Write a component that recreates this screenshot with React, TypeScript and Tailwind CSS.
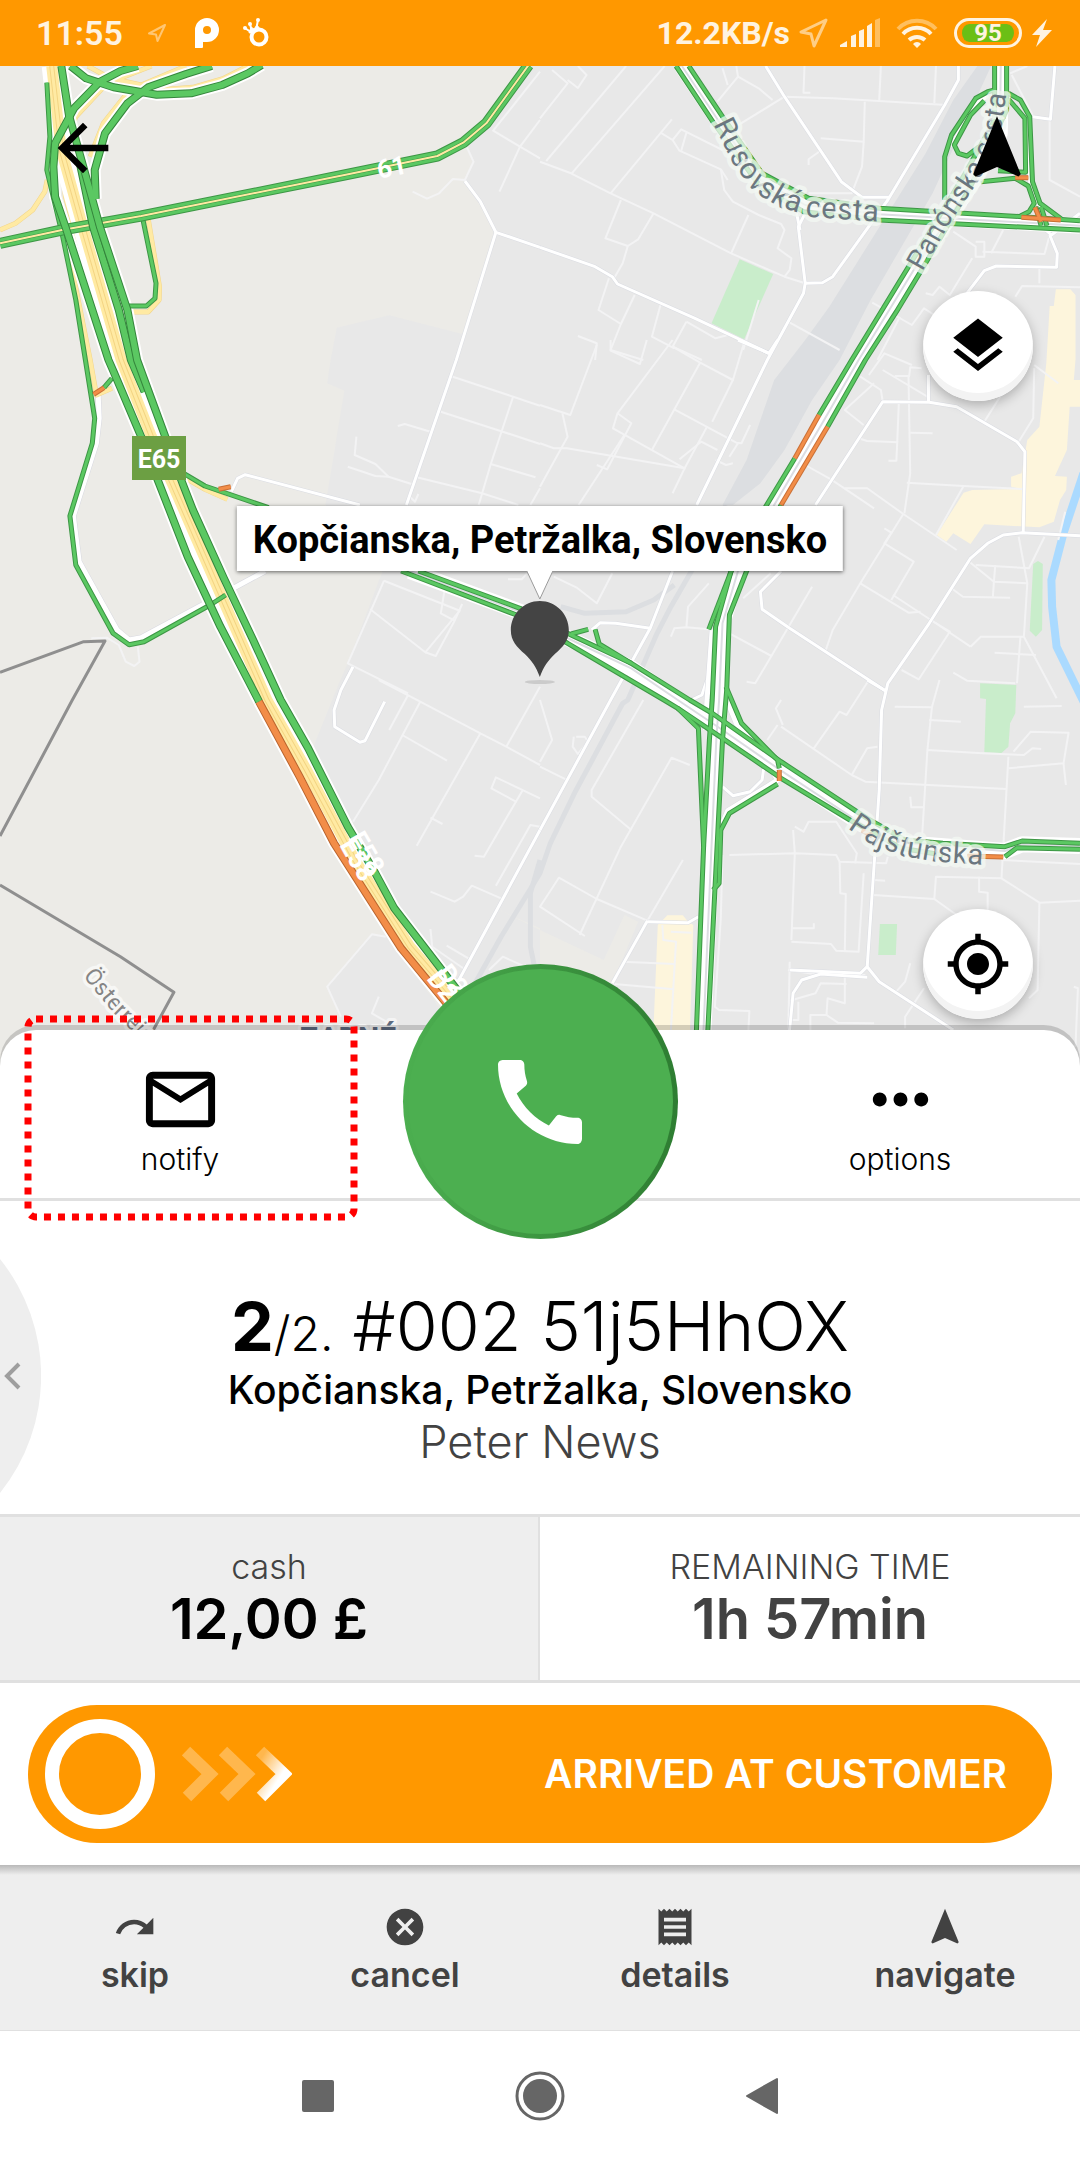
import type { ReactNode } from "react";
import {
  MdArrowBack,
  MdCall,
  MdCancel,
  MdLayers,
  MdMailOutline,
  MdMoreHoriz,
  MdMyLocation,
  MdNavigation,
  MdReceipt,
  MdRedo,
} from "react-icons/md";

/* The map is drawn from six sheets, each with its own 1568 x 1080 grid. */
const sheet =
  (left: number, top: number) =>
  (...n: number[]) => {
    const out: string[] = [];
    for (let i = 0; i < n.length; i += 2) {
      out.push(`${(left + (n[i] * 540) / 1568).toFixed(1)},${(top + n[i + 1] / 3).toFixed(1)}`);
    }
    return out.join(" ") + " ";
  };
const a = sheet(0, 0);
const b = sheet(540, 0);
const c = sheet(0, 340);
const d = sheet(540, 340);
const e = sheet(0, 680);
const f = sheet(540, 680);

const urban = [
  a(1540, 190, 1360, 440, 1375, 485, 1350, 540, 1400, 610, 1440, 697, 1345, 1003, 1130, 946, 978, 983, 960, 1080) +
    c(950, 130, 1000, 152, 945, 495, 1110, 695, 1010, 970) +
    e(980, 20, 910, 200, 1025, 430, 1100, 580, 1150, 680, 1350, 930, 1500, 1200) +
    f(1568, 1200, 1568, 0) +
    b(1568, 190),
  e(1080, 763, 950, 920, 990, 1010, 990, 1200, 1400, 1200, 1260, 960, 1120, 770),
];
const rural = [e(1450, 690, 1568, 745, 1568, 1000, 1330, 1000) + f(210, 910, 285, 725, 245, 705, 185, 840, 0, 750)];

const parks = [
  b(580, 778, 677, 822, 593, 1018, 498, 970),
  d(1432, 672, 1446, 663, 1460, 672, 1458, 870, 1440, 890, 1422, 872),
  f(1278, 10, 1383, 15, 1380, 100, 1365, 130, 1360, 200, 1340, 219, 1290, 217, 1295, 57, 1278, 55),
  f(987, 732, 1037, 732, 1033, 825, 982, 825),
];
const shops = [
  b(1498, 868, 1540, 868, 1555, 885, 1555, 1080) +
    d(1550, 120, 1568, 120, 1568, 200, 1538, 200, 1530, 330, 1495, 408, 1530, 410, 1528, 450, 1510, 480) +
    d(1492, 545, 1450, 562, 1290, 553, 1250, 612, 1200, 580, 1180, 605, 1152, 585, 1230, 458, 1255, 450) +
    d(1400, 447, 1368, 440, 1368, 410, 1398, 400, 1415, 300, 1450, 260, 1470, 70) +
    b(1480, 918, 1492, 918),
  f(370, 706, 415, 706, 430, 725, 445, 735, 432, 1160, 325, 1160, 342, 735),
];
const railYards = [
  b(1270, 198, 1310, 198, 1140, 580, 960, 900, 870, 1080) +
    d(790, 180, 710, 330, 640, 430, 560, 495, 530, 495, 600, 360, 680, 120, 770, 0) +
    b(840, 920, 1120, 460, 1200, 300),
];
const railTracks = [
  d(540, 495, 440, 693, 380, 800, 340, 880, 255, 1080) + f(240, 70, 100, 340, 30, 490, 0, 580) + e(1455, 770, 1390, 890, 1330, 1000),
  e(1568, 540, 1540, 640, 1540, 800, 1560, 900),
  d(60, 800, 130, 820, 250, 815, 330, 780, 390, 735),
];

const lanes = [
  a(1568, 215, 1432, 392, 1510, 440, 1568, 475),
  a(1568, 360, 1510, 440, 1450, 575),
  a(1355, 440, 1375, 485, 1350, 540, 1315, 537, 1275, 580, 1240, 596, 1198, 575),
  b(0, 485, 90, 520, 205, 580, 330, 640, 555, 760, 710, 830, 770, 850),
  b(18, 483, 250, 198),
  b(92, 520, 362, 198),
  b(205, 580, 383, 358),
  b(0, 355, 80, 250, 35, 210),
  b(80, 240, 110, 264, 135, 225, 110, 198),
  b(350, 398, 385, 420, 410, 388, 530, 450),
  b(385, 420, 405, 452, 525, 508, 545, 540),
  b(410, 452, 425, 398),
  b(525, 508, 535, 570, 560, 605, 635, 645, 700, 672, 710, 690, 690, 745, 730, 775, 725, 810, 710, 830),
  b(555, 760, 605, 645),
  b(235, 600, 190, 715, 255, 738, 285, 718, 330, 640),
  b(255, 738, 240, 790, 215, 835),
  b(515, 305, 575, 230, 570, 198),
  b(575, 230, 635, 265, 675, 300),
  b(545, 255, 530, 205),
  b(560, 385, 710, 290, 850, 295, 1180, 315),
  b(768, 198, 765, 278, 785, 278),
  b(990, 198, 985, 300),
  b(1150, 198, 1145, 310),
  b(943, 305, 940, 425, 815, 415),
  b(940, 425, 935, 500, 905, 580, 780, 580),
  b(810, 455, 780, 478, 780, 495),
  b(200, 835, 170, 930, 235, 972, 205, 1050, 300, 1080),
  b(275, 885, 235, 972),
  b(350, 915, 325, 1010, 390, 1045),
  b(425, 965, 385, 1040, 470, 1080),
  b(425, 965, 510, 1015, 545, 1005),
  b(110, 1008, 165, 1030, 160, 1080),
  b(635, 900, 590, 1050),
  b(720, 965, 870, 1050),
  b(965, 908, 1080, 975, 1115, 925, 1145, 945),
  b(1045, 950, 980, 1080),
  b(1200, 695, 1265, 740, 1265, 770, 1290, 770, 1290, 725, 1265, 725),
  b(1285, 755, 1465, 762, 1480, 705),
  b(1120, 880, 1140, 885, 1160, 860, 1190, 885, 1255, 775),
  b(1310, 760, 1345, 690),
  b(1380, 890, 1400, 858, 1568, 862),
  b(1450, 800, 1450, 850),
  b(1480, 360, 1480, 540, 1568, 590),
  b(1370, 225, 1435, 355),
  b(1365, 220, 1415, 198),
  c(1308, 108, 1490, 170, 1568, 197),
  c(1280, 215, 1460, 275, 1568, 312),
  c(1490, 170, 1425, 372, 1390, 495),
  c(1425, 372, 1555, 412),
  c(1210, 412, 1400, 460, 1505, 495),
  c(1155, 258, 1175, 252, 1250, 275),
  c(1035, 290, 1030, 345, 1090, 372, 1128, 410, 1195, 432),
  c(1010, 380, 1090, 408, 1128, 410),
  c(1568, 445, 1540, 495),
  c(1115, 722, 1335, 812, 1235, 937, 1075, 808),
  c(1115, 722, 1010, 970, 1185, 1060),
  c(1290, 755, 1280, 820, 1320, 842, 1265, 948, 1235, 937),
  c(1342, 792, 1320, 842),
  c(1475, 718, 1515, 718, 1530, 700),
  c(265, 895, 310, 893, 345, 915, 365, 965, 390, 978, 405, 965, 400, 920),
  c(1185, 465, 1205, 485, 1215, 462),
  d(0, 195, 88, 225, 165, 15),
  d(205, 0, 205, 32, 290, 72, 310, 0),
  d(0, 440, 80, 290, 65, 220),
  d(385, 0, 225, 220, 212, 265, 420, 385, 485, 260),
  d(225, 220, 265, 250, 195, 388, 165, 375),
  d(112, 495, 245, 285),
  d(385, 20, 465, 68, 560, 120, 595, 0),
  d(465, 68, 325, 330),
  d(560, 120, 500, 245),
  d(390, 208, 570, 308, 585, 310, 610, 255),
  d(0, 310, 40, 325, 78, 325, 420, 385, 385, 460),
  d(405, 358, 468, 305, 515, 330),
  d(510, 360, 540, 375, 560, 370),
  d(575, 310, 550, 350),
  d(930, 110, 990, 150, 995, 185),
  d(995, 90, 1125, 170),
  d(955, 105, 1000, 40, 1080, 75),
  d(1030, 108, 1072, 108, 1075, 82, 1108, 85),
  d(1070, 108, 1075, 400, 1058, 520),
  d(1042, 185, 1035, 362, 1012, 362),
  d(970, 130, 885, 210, 940, 255),
  d(925, 295, 950, 303, 1040, 307),
  d(1075, 278, 1140, 280),
  d(1065, 428, 1230, 438, 1400, 447),
  d(770, 375, 845, 418, 970, 505),
  d(885, 445, 950, 445, 1055, 522, 1210, 630),
  d(1230, 438, 1150, 585),
  d(1055, 522, 930, 730, 850, 870, 830, 930),
  d(1000, 565, 1020, 578, 1000, 610, 1085, 665, 1020, 780),
  d(930, 730, 1070, 818, 1105, 815),
  d(1025, 765, 1135, 840, 1250, 920),
  d(1135, 840, 1190, 875, 1100, 1018, 1050, 990),
  d(1250, 920, 1280, 890, 1405, 890),
  d(1320, 938, 1440, 945),
  d(1200, 998, 1240, 1022, 1380, 1030),
  d(1395, 890, 1385, 1030),
  d(1405, 890, 1500, 1075),
  d(1390, 590, 1415, 730, 1405, 890),
  d(1465, 590, 1420, 685, 1265, 675),
  d(1250, 668, 1318, 725, 1415, 730),
  d(1318, 725, 1322, 675),
  d(1195, 745, 1228, 770, 1365, 773),
  d(1318, 725, 1315, 770),
  d(1525, 515, 1505, 600),
  d(1290, 245, 1345, 155),
  d(1435, 85, 1432, 235, 1390, 305),
  d(1435, 75, 1505, 130),
  d(380, 890, 390, 865, 425, 862, 490, 868),
  d(425, 862, 430, 800, 490, 730),
  d(40, 710, 105, 742, 165, 790, 210, 700),
  d(590, 775, 670, 700),
  d(550, 880, 672, 948, 790, 740),
  d(600, 1025, 625, 1030, 672, 948),
  e(1100, 0, 1220, 65, 1395, 160, 1470, 200, 1568, 255),
  e(1220, 65, 1100, 300, 1025, 425),
  e(1185, 45, 1130, 150),
  e(1168, 165, 1298, 242),
  e(1395, 160, 1210, 497),
  e(1250, 413, 1285, 432),
  e(1470, 200, 1568, 20),
  e(1568, 355, 1440, 292, 1427, 325, 1498, 365, 1518, 330),
  e(1498, 365, 1405, 530, 1378, 527),
  e(1568, 440, 1540, 435, 1440, 617),
  e(1250, 635, 1320, 665, 1345, 650, 1370, 617, 1455, 655),
  e(1250, 747, 1255, 800, 1345, 865),
  e(1297, 797, 1360, 835),
  e(1120, 770, 1080, 763, 950, 920, 990, 1010),
  e(1100, 950, 1080, 1000, 1130, 1030),
  e(1420, 870, 1460, 830, 1568, 880),
  f(0, 60, 35, 180, 0, 245),
  f(0, 260, 75, 298),
  f(300, 60, 150, 330, 150, 350, 265, 450),
  f(435, 255, 382, 233, 235, 500, 115, 765),
  f(415, 540, 312, 722, 165, 657, 55, 593, 0, 680, 130, 768),
  f(105, 170, 130, 170, 140, 185, 110, 222, 95, 200, 98, 170),
  f(740, 440, 765, 455, 780, 425, 860, 425, 920, 520, 915, 550),
  f(735, 450, 740, 520, 730, 780),
  f(550, 525, 740, 520, 860, 525, 870, 545, 1005, 550, 1010, 530),
  f(870, 545, 872, 640, 888, 642, 885, 815),
  f(730, 785, 845, 792, 860, 812, 925, 815, 940, 580),
  f(730, 745, 795, 745, 795, 730),
  f(705, 135, 685, 85, 700, 60),
  f(690, 135, 660, 180),
  f(700, 140, 905, 285, 945, 305, 1355, 327),
  f(905, 285, 950, 205, 980, 200),
  f(795, 205, 870, 95, 890, 105, 955, 0),
  f(1030, 80, 1138, 82, 1160, 0),
  f(1138, 82, 1125, 210, 1110, 460),
  f(1130, 120, 1222, 125),
  f(1125, 210, 1285, 220, 1405, 225, 1430, 205, 1455, 207),
  f(1375, 215, 1425, 155, 1535, 158, 1520, 250, 1360, 265),
  f(1520, 250, 1527, 315),
  f(1405, 80, 1515, 78),
  f(1360, 230, 1340, 595),
  f(1075, 350, 1078, 382, 1115, 382),
  f(968, 645, 1145, 657, 1150, 590, 1340, 595, 1450, 668, 1445, 930, 1420, 955),
  f(1145, 657, 1230, 720),
  f(1275, 590, 1275, 635, 1300, 638, 1300, 700),
  f(1450, 668, 1568, 662),
  f(1340, 540, 1568, 552),
  f(970, 600, 1002, 602),
  f(530, 525, 525, 715, 508, 980, 520, 990, 608, 993, 605, 1050),
  f(725, 845, 720, 1100),
  f(720, 870, 815, 885, 945, 885),
  f(885, 890, 885, 970, 835, 955, 832, 1005, 785, 1005, 785, 1060),
  f(890, 912, 815, 910, 800, 940, 725, 962),
  f(832, 1005, 865, 1028, 970, 1030),
  f(750, 965, 750, 1020, 730, 1020),
  f(1075, 850, 1060, 905, 1030, 940),
  f(1115, 925, 1060, 1010, 1060, 1045),
  f(1550, 920, 1562, 925, 1555, 1100),
  f(355, 735, 358, 780, 395, 785, 380, 1050),
  f(380, 755, 440, 758),
  f(240, 845, 390, 852),
  f(215, 912, 390, 928),
];

const streets = [
  a(1350, 543, 1395, 605, 1440, 697, 1568, 742),
  a(1440, 697, 1325, 1080) + c(1180, 495),
  c(672, 455, 690, 415, 712, 404, 1045, 495),
  b(0, 742, 160, 800, 210, 830, 225, 852, 450, 955, 665, 1060),
  b(655, 198, 710, 290, 875, 545, 935, 592, 1015, 592),
  b(1215, 198, 1215, 240, 1175, 315, 1010, 600, 850, 830, 820, 848, 770, 850),
  b(770, 640, 750, 680, 770, 850, 765, 880, 660, 1080) + d(455, 495),
  b(745, 640, 755, 690),
  b(1495, 198, 1482, 358, 1430, 350),
  b(1480, 705, 1502, 760, 1500, 802, 1325, 798, 1290, 812, 1210, 920),
  b(1430, 655, 1485, 705, 1568, 640),
  d(575, 0, 665, 40, 690, 0),
  d(800, 495, 995, 185, 1130, 187, 1210, 200, 1385, 305, 1408, 335, 1403, 578),
  d(1128, 105, 1128, 185),
  d(1568, 587, 1400, 578, 1345, 585, 1300, 610, 1250, 655, 1130, 850, 1010, 1030) + f(992, 90, 985, 330, 950, 860),
  d(700, 693, 640, 755, 645, 808, 725, 865, 1003, 1052),
  f(950, 0, 1003, 32),
  d(385, 693, 320, 865, 205, 1080) + f(0, 450),
  d(150, 870, 175, 848, 220, 850, 320, 865),
  e(1568, 450, 1330, 905),
  c(1025, 980, 990, 1050) + e(970, 90, 972, 140, 1045, 187, 1060, 182, 1117, 65),
  f(312, 722, 210, 910),
  f(312, 725, 430, 728, 460, 710),
  f(725, 870, 930, 880, 950, 860, 985, 905, 1200, 1050),
  f(720, 1100, 735, 940, 760, 900, 815, 882, 950, 892),
  f(485, 0, 470, 45, 440, 60),
  f(530, 320, 560, 347, 610, 335, 645, 300, 650, 260),
];

const west =
  a(400, 198, 350, 213, 290, 245, 215, 325, 160, 430, 155, 500, 160, 590, 190, 680, 315, 1080) +
  c(330, 95, 410, 290, 460, 425, 545, 650, 640, 860, 750, 1080) +
  e(752, 65);
const westSlow = e(752, 65, 870, 290, 970, 490, 1165, 805, 1320, 1000);
const east =
  a(178, 198, 200, 345, 250, 530, 290, 680, 370, 930, 398, 1080) +
  c(430, 150, 480, 290, 530, 430, 560, 510, 650, 715, 735, 900, 815, 1080) +
  e(895, 205, 1010, 440, 1090, 580, 1145, 685, 1350, 960);
const eastInner = a(230, 480, 270, 680, 345, 930, 380, 1080) + c(420, 155);
const median =
  a(150, 198, 178, 450, 240, 680, 352, 1080) +
  c(440, 290, 500, 430, 635, 750, 775, 1080) +
  e(890, 270, 1030, 540, 1190, 800, 1340, 980);
const route61 = a(0, 730, 180, 690, 410, 648, 1000, 525, 1270, 468, 1345, 428, 1412, 370, 1535, 195);
const loopA = a(205, 198, 250, 235, 330, 262, 455, 284, 555, 280, 645, 255, 720, 220, 760, 195);
const loopB = a(615, 198, 540, 222, 430, 262, 370, 310, 305, 400, 275, 510, 278, 597);
const yellowRamps = [
  a(0, 690, 45, 670, 95, 630, 130, 575, 137, 540),
  a(430, 655, 463, 860, 462, 900, 430, 936, 385, 936),
  a(255, 198, 320, 235, 410, 255, 540, 198),
  a(460, 270, 560, 262, 650, 235, 720, 198),
  a(365, 285, 300, 370, 262, 470),
  a(300, 262, 220, 350, 180, 460, 190, 590, 225, 720),
  a(440, 198, 340, 238),
  a(200, 760, 262, 1080) + c(280, 165, 325, 145),
  c(540, 415, 595, 448, 660, 478),
];

const whiteBase = [
  b(412, 198, 520, 365, 640, 540, 770, 615, 985, 643, 1568, 677),
  b(1338, 198, 1335, 400, 1260, 540, 1085, 810, 925, 1080) +
    d(825, 240, 680, 495, 575, 693, 530, 850, 520, 1080) +
    f(512, 180, 498, 500, 470, 1160),
  c(1190, 693, 1510, 815) + d(85, 897, 265, 985, 400, 1080) + f(530, 150, 700, 272, 940, 435, 1060, 490, 1350, 513, 1400, 493, 1568, 498),
];
const thinBase = [
  c(285, 165, 288, 235, 280, 310, 213, 528, 230, 665, 340, 870, 375, 900, 410, 893, 605, 785, 770, 693),
  d(500, 868, 485, 1080) + f(480, 150),
  f(535, 40, 570, 130, 640, 215, 690, 300, 545, 392, 530, 430),
  b(1300, 285, 1260, 320, 1195, 440),
  b(1415, 350, 1425, 550, 1460, 640),
];
const green = [
  b(395, 198, 505, 370, 640, 560, 765, 635, 985, 660, 1568, 690),
  b(432, 198, 530, 350, 645, 520, 780, 595, 985, 625, 1400, 650, 1568, 662),
  b(1320, 198, 1320, 360, 1235, 520, 1070, 800, 905, 1080) + d(810, 225),
  d(740, 355, 655, 500, 555, 693, 510, 860, 500, 1080) + f(492, 180, 475, 500, 450, 1160),
  b(1355, 198, 1355, 330, 1250, 560, 1105, 815, 1035, 935, 945, 1080) + d(835, 260),
  d(700, 495, 600, 693, 550, 825, 542, 1050) + f(530, 180, 508, 630, 482, 1160),
  d(560, 680, 490, 868),
  c(1215, 693, 1510, 805) + d(90, 885, 265, 970, 435, 1080) + f(500, 100, 700, 245, 950, 415, 1060, 480, 1170, 490, 1350, 500, 1400, 483, 1568, 490),
  c(1165, 693, 1500, 825) + d(80, 910, 360, 1080) + f(400, 85, 530, 175, 700, 295, 900, 420, 1050, 505, 1170, 525),
  f(1350, 530, 1385, 503, 1568, 508),
  d(90, 882, 140, 868),
  d(160, 868, 172, 912, 265, 970),
  f(540, 20, 585, 130, 690, 240, 695, 265),
  f(690, 312, 550, 400, 525, 450, 520, 610, 503, 630),
  f(400, 85, 460, 145, 475, 500),
  b(1320, 270, 1300, 275, 1265, 295, 1195, 405, 1175, 470, 1175, 600),
  b(1290, 302, 1250, 345, 1203, 435, 1215, 460, 1240, 468, 1275, 440),
  b(1360, 280, 1395, 300, 1422, 350, 1430, 545, 1452, 610, 1515, 658),
  b(1360, 297, 1408, 355, 1410, 517, 1330, 512),
  b(1280, 545, 1380, 535, 1418, 558, 1435, 610, 1420, 635, 1395, 648),
  b(1440, 620, 1455, 677),
  b(1455, 620, 1472, 677),
  a(136, 248, 145, 410, 136, 510, 180, 700, 220, 900, 248, 1080) +
    c(275, 235, 268, 310, 203, 528, 220, 675, 328, 880, 375, 914, 418, 905, 610, 795, 655, 765),
  a(413, 648, 453, 850, 450, 895, 425, 918, 370, 918),
  c(302, 143, 325, 115),
  c(530, 398, 595, 438, 780, 503),
];
const slow = [
  d(810, 225, 740, 355),
  d(835, 260, 700, 495),
  f(695, 270, 695, 303),
  f(1240, 528, 1345, 531),
  f(935, 450, 965, 468),
  b(1380, 533, 1418, 533),
  b(1398, 652, 1512, 660),
  b(1437, 622, 1455, 665),
  c(272, 163, 302, 143),
  c(635, 448, 670, 440),
];
const frontier = [c(0, 997, 243, 905, 305, 903, 210, 1080) + e(0, 468), e(0, 615, 350, 830, 505, 937, 440, 1060)];
const river = d(1578, 400, 1520, 580, 1485, 720, 1487, 800, 1500, 920, 1590, 1110);

function Lines({ of, color, width }: { of: string[]; color: string; width: number }) {
  return (
    <g fill="none" stroke={color} strokeWidth={width} strokeLinejoin="round">
      {of.map((points) => (
        <polyline key={points} points={points} />
      ))}
    </g>
  );
}

function Areas({ of, color }: { of: string[]; color: string }) {
  return (
    <g fill={color}>
      {of.map((points) => (
        <polygon key={points} points={points} />
      ))}
    </g>
  );
}

function RoadName({ id, along, size, children }: { id: string; along: string; size: number; children: ReactNode }) {
  return (
    <>
      <path id={id} d={`M${along}`} fill="none" />
      <text
        fontSize={size}
        fill="#6b7780"
        stroke="#f3f8f3"
        strokeOpacity="0.75"
        strokeWidth="9"
        strokeLinejoin="round"
        paintOrder="stroke"
      >
        <textPath href={`#${id}`}>{children}</textPath>
      </text>
    </>
  );
}

function CityMap() {
  return (
    <svg
      aria-label="Traffic map"
      className="absolute inset-0 h-full w-full font-[Roboto,sans-serif]"
      viewBox="0 66 1080 1004"
      preserveAspectRatio="xMidYMin slice"
    >
      <rect y="66" width="1080" height="1004" fill="#ecebe7" />
      <Areas of={urban} color="#e8e8e8" />
      <Areas of={rural} color="#ecebe7" />
      <Areas of={railYards} color="#dcdee1" />
      <Lines of={railTracks} color="#dcdee1" width={5} />
      <Areas of={shops} color="#fdf5dc" />
      <Areas of={parks} color="#c9edcb" />
      <Lines of={[river]} color="#aadaff" width={8} />
      <Lines of={lanes} color="#f3f3f4" width={2} />
      <Lines of={streets} color="#dadce2" width={4} />
      <Lines of={streets} color="#ffffff" width={3} />
      <Lines of={frontier} color="#8f8f8f" width={3} />

      <Lines of={thinBase} color="#d8d9e0" width={6} />
      <Lines of={thinBase} color="#ffffff" width={5} />
      <Lines of={whiteBase} color="#ffffff" width={16} />
      <Lines of={whiteBase} color="#dcdde2" width={2} />

      <Lines of={yellowRamps} color="#f2d58c" width={5} />
      <Lines of={yellowRamps} color="#ffeaa3" width={4} />
      <Lines of={[west, westSlow, east, loopA, loopB]} color="#ffffff" width={12} />
      <Lines of={[median]} color="#ffffff" width={20} />
      <Lines of={[median]} color="#ffeaa3" width={11} />
      <Lines of={[median]} color="#f3d483" width={5} />
      <Lines of={[median]} color="#ffeaa3" width={3} />

      <Lines of={green} color="#3d9645" width={5} />
      <Lines of={green} color="#5bc862" width={3} />
      <Lines of={slow} color="#c96f35" width={5} />
      <Lines of={slow} color="#f28d48" width={3} />

      <Lines of={[route61]} color="#3d9645" width={11} />
      <Lines of={[route61]} color="#5bc862" width={9} />
      <Lines of={[route61]} color="#3d9645" width={3} />
      <Lines of={[route61]} color="#ffeaa3" width={2} />
      <Lines of={[eastInner]} color="#35853c" width={8} />
      <Lines of={[eastInner]} color="#5bc862" width={6} />
      <Lines of={[loopA, loopB, west, east]} color="#35853c" width={8} />
      <Lines of={[loopA, loopB, west, east]} color="#5bc862" width={6} />
      <Lines of={[westSlow]} color="#b9642d" width={8} />
      <Lines of={[westSlow]} color="#f28d48" width={6} />

      <RoadName id="rusovska" size={30} along={b(503, 372, 560, 490, 620, 575, 690, 618, 790, 652, 880, 658, 1020, 667)}>
        Rusovská cesta
      </RoadName>
      <RoadName id="panonska" size={28} along={b(1110, 815, 1190, 670, 1275, 540, 1335, 410, 1352, 300, 1352, 200)}>
        Panónska cesta
      </RoadName>
      <RoadName id="pajstunska" size={29} along={f(893, 445, 960, 492, 1050, 527, 1150, 545, 1300, 555)}>
        Pajštúnska
      </RoadName>
      <path id="osterreich" d={`M${e(240, 888, 330, 1000, 480, 1150)}`} fill="none" />
      <text fontSize="23" fill="#858585" stroke="#f7f7f5" strokeWidth="7" strokeLinejoin="round" paintOrder="stroke">
        <textPath href="#osterreich">Österreich</textPath>
      </text>
      <g fill="#ffffff" fontWeight="700" fontSize="26">
        <text transform="translate(379 179) rotate(-12)">61</text>
        <text transform="translate(339 845) rotate(60)">E58</text>
        <text transform="translate(348 838) rotate(60)">E58</text>
        <text transform="translate(426 979) rotate(52)">D2</text>
        <text transform="translate(436 973) rotate(52)">D2</text>
      </g>
      <text
        x="300"
        y="1048"
        fontSize="30"
        fontWeight="700"
        fill="#5d6b80"
        stroke="#f4f4f4"
        strokeWidth="6"
        strokeLinejoin="round"
        paintOrder="stroke"
      >
        ZADNÉ
      </text>
      <rect x="132" y="436" width="54" height="44" fill="#6c9f43" />
      <text x="159" y="468" textAnchor="middle" fontSize="25" fontWeight="700" fill="#ffffff">
        E65
      </text>
    </svg>
  );
}

function StatusBar() {
  return (
    <header className="flex h-[66px] shrink-0 items-center bg-[#ff9800] pr-7 pl-9 font-[Roboto,sans-serif] text-[#fff3e0]">
      <span className="text-[34px] font-semibold">11:55</span>
      <svg className="ml-6 h-5 w-5" viewBox="0 0 20 20" fill="none" stroke="#ffc673" strokeWidth="2">
        <path d="M18 2 L2 10.500 L9 11.500 L10.500 18 Z" strokeLinejoin="round" />
      </svg>
      <svg className="ml-7 h-[30px] w-6" viewBox="0 0 24 30" fill="#ffffff">
        <path
          fillRule="evenodd"
          d="M0 30V12A12 12 0 1 1 12 24H8V29Q8 30 7 30ZM12 8A4 4 0 1 0 12 16A4 4 0 1 0 12 8Z"
        />
      </svg>
      <svg className="ml-6 h-[30px] w-[26px]" viewBox="0 0 26 30" fill="none" stroke="#ffffff">
        <circle cx="16" cy="19" r="7.500" strokeWidth="4" />
        <path d="M9 15 L2 10 M9 14 L7 6 M13 12 L15 2" strokeWidth="2" />
        <path d="M6 15 L8 9 L11 11 L14 7 L17 11 Z" fill="#ffffff" strokeWidth="1" />
        <g fill="#ffffff" stroke="none">
          <circle cx="2" cy="10" r="2" />
          <circle cx="7" cy="6" r="2" />
          <circle cx="15" cy="2" r="2" />
        </g>
      </svg>
      <span className="ml-auto text-[32px] font-bold">12.2KB/s</span>
      <svg className="ml-2 h-[30px] w-[30px]" viewBox="0 0 30 30" fill="none" stroke="#ffce85" strokeWidth="3">
        <path d="M28 2 L3 14 L13 16 L16 28 Z" strokeLinejoin="round" />
      </svg>
      <svg className="ml-3 h-[30px] w-10" viewBox="0 0 40 30" fill="#fff3e0">
        <path d="M0 29V27L7 23V29Z M11 18L16 16V29H11Z M19 13L24 11V29H19Z M27 8L32 5V29H27Z" />
        <path d="M35 2L40 0V29H35Z" fill="#ffbf5e" />
      </svg>
      <svg className="ml-4 h-[30px] w-[42px]" viewBox="0 0 42 30" fill="none" stroke="#fff3e0" strokeWidth="4">
        <path d="M2 11A26 26 0 0 1 40 11" stroke="#ffbf5e" />
        <path d="M7 16A19 19 0 0 1 35 16" />
        <path d="M13 22A12 12 0 0 1 29 22" />
        <path d="M17 26A5 5 0 0 1 25 26L21 30Z" fill="#fff3e0" stroke="none" />
      </svg>
      <div className="ml-4 h-[30px] w-[68px] rounded-full border-3 border-[#fff3e0] p-[3px]">
        <div className="flex h-full items-center justify-center rounded-full border-x-2 border-[#ff9800] bg-[#6bbf15] text-2xl font-bold">
          95
        </div>
      </div>
      <svg className="ml-[10px] h-7 w-5" viewBox="0 0 20 28" fill="#fff3e0">
        <path d="M15 0 L0 16 H8 L4 28 L20 11 H11 Z" />
      </svg>
    </header>
  );
}

function RoundButton({ label, children }: { label: string; children: ReactNode }) {
  return (
    <button
      aria-label={label}
      className="flex h-[110px] w-[110px] items-center justify-center rounded-full bg-white text-[66px] text-black shadow-[inset_0_-8px_0_#f3f3f3,0_4px_12px_rgba(0,0,0,0.25)]"
    >
      {children}
    </button>
  );
}

function MapView() {
  return (
    <section className="relative flex min-h-[800px] flex-1 flex-col pb-[51px]">
      <CityMap />
      <div className="relative flex items-start justify-between px-[45px] pt-11 text-[76px] text-black">
        <button aria-label="Back">
          <MdArrowBack />
        </button>
        <button aria-label="Compass">
          <MdNavigation />
        </button>
      </div>
      <div className="relative mt-[105px] flex flex-1 flex-col items-end justify-between pr-[47px]">
        <RoundButton label="Map layers">
          <MdLayers />
        </RoundButton>
        <RoundButton label="My location">
          <MdMyLocation />
        </RoundButton>
      </div>
      <div className="absolute top-[440px] left-1/2 flex -translate-x-1/2 flex-col items-center">
        <p className="bg-white px-4 pt-[3px] font-[Roboto,sans-serif] text-[38px] leading-[62px] font-bold whitespace-nowrap text-black shadow-[0_1px_4px_rgba(0,0,0,0.6)]">
          Kopčianska, Petržalka, Slovensko
        </p>
        <svg className="relative h-[114px] w-[60px]" viewBox="0 0 60 114">
          <path d="M17 0 L30 28 L43 0" fill="#ffffff" stroke="#9a9a9a" strokeWidth="1" />
          <ellipse cx="30" cy="111" rx="15" ry="2" fill="#000000" opacity="0.12" />
          <path
            d="M30 30C14 30 1 43 1 59C1 70 7 76 15 83C22 90 26 95 30 106C34 95 38 90 45 83C53 76 59 70 59 59C59 43 46 30 30 30Z"
            fill="#444444"
          />
        </svg>
      </div>
    </section>
  );
}

function ContactRow() {
  return (
    <div className="relative grid h-[171px] grid-cols-3 border-b-3 border-[#e0e0e0] text-[30px] leading-9 font-light text-black">
      <button className="flex flex-col items-center pt-7">
        <MdMailOutline className="text-[83px]" />
        <span>notify</span>
      </button>
      <div className="flex justify-center">
        <button
          aria-label="Call customer"
          className="absolute -top-[66px] flex h-[275px] w-[275px] rounded-full bg-[linear-gradient(to_right,#4caf50,#2e7d32)] p-[5px]"
        >
          <span className="flex h-full w-full items-center justify-center rounded-full bg-[#4caf50] text-[112px] text-white">
            <MdCall />
          </span>
        </button>
      </div>
      <button className="flex flex-col items-center pt-7">
        <MdMoreHoriz className="text-[83px]" />
        <span>options</span>
      </button>
      <svg className="pointer-events-none absolute -top-[15px] left-6 h-[206px] w-[334px]" viewBox="0 0 334 206" fill="none">
        <rect x="4" y="4" width="326" height="198" rx="8" stroke="#ff0000" strokeWidth="7" strokeDasharray="7 7" />
      </svg>
    </div>
  );
}

function OrderInfo() {
  return (
    <div className="relative flex h-[316px] flex-col items-center justify-center overflow-hidden border-b-3 border-[#e0e0e0] pt-10 text-black">
      <button aria-label="Previous order" className="absolute top-[58px] left-0 h-[234px] w-[41px] text-[#9e9e9e]">
        <svg className="h-full w-full" viewBox="0 0 41 234">
          <path d="M0 0A187 187 0 0 1 0 234Z" fill="#eeeeee" />
          <path d="M19 105L7 117L19 129" fill="none" stroke="currentColor" strokeWidth="4" />
        </svg>
      </button>
      <h1 className="text-[68px] leading-[78px] font-light">
        <b className="font-bold">2</b>
        <span className="text-5xl">/2.</span> #002 51j5HhOX
      </h1>
      <p className="text-[39px] leading-[50px] font-medium">Kopčianska, Petržalka, Slovensko</p>
      <p className="text-[45px] leading-[54px] font-light text-[#424242]">Peter News</p>
    </div>
  );
}

function Figures() {
  return (
    <dl className="grid h-[166px] grid-cols-2 border-b-3 border-[#e0e0e0] pb-1 text-center text-[#424242] [background:linear-gradient(to_right,#eeeeee_50%,#ffffff_50%)]">
      <div className="-mb-1 flex flex-col justify-center border-r-2 border-[#e0e0e0] pb-1">
        <dt className="text-[34px] leading-[44px] font-light">cash</dt>
        <dd className="text-[56px] leading-[60px] font-semibold text-black">12,00 £</dd>
      </div>
      <div className="flex flex-col justify-center">
        <dt className="text-[34px] leading-[44px] font-light">REMAINING TIME</dt>
        <dd className="text-[56px] leading-[60px] font-semibold">1h 57min</dd>
      </div>
    </dl>
  );
}

function SlideToConfirm() {
  return (
    <div className="px-7 py-[22px]">
      <button className="flex h-[138px] w-full items-center rounded-full bg-[#ff9800] pr-[45px] pl-[17px] text-white">
        <span className="h-[110px] w-[110px] rounded-full border-14 border-white" />
        <svg className="ml-[27px] h-14 w-[110px]" viewBox="0 0 110 56" fill="none" strokeWidth="12">
          <defs>
            <linearGradient id="glow" gradientUnits="userSpaceOnUse" x1="78" y1="14" x2="100" y2="28">
              <stop offset="0" stopColor="#ffb74d" />
              <stop offset="1" stopColor="#ffffff" />
            </linearGradient>
          </defs>
          <path d="M4 5L28 28L5 51" stroke="#ffb74d" />
          <path d="M41 5L65 28L42 51" stroke="#ffb74d" />
          <path d="M78 5L102 28L79 51" stroke="url(#glow)" />
        </svg>
        <span className="ml-auto text-[39px] font-semibold">ARRIVED AT CUSTOMER</span>
      </button>
    </div>
  );
}

const actions = [
  { label: "skip", icon: <MdRedo /> },
  { label: "cancel", icon: <MdCancel /> },
  { label: "details", icon: <MdReceipt /> },
  { label: "navigate", icon: <MdNavigation /> },
];

function ActionBar() {
  return (
    <nav className="grid h-[166px] shrink-0 grid-cols-4 border-b border-[#e0e0e0] bg-[#eeeeee] bg-[linear-gradient(to_bottom,#b8b8b8,#eeeeee_10px)] text-[#424242]">
      {actions.map(({ label, icon }) => (
        <button key={label} className="flex flex-col items-center pt-10">
          <span className="text-[44px]">{icon}</span>
          <span className="mt-1 text-[34px] leading-[44px] font-semibold">{label}</span>
        </button>
      ))}
    </nav>
  );
}

function SystemKeys() {
  return (
    <footer className="flex h-[129px] shrink-0 items-center justify-center gap-[173px] bg-white text-[#666666]">
      <button aria-label="Recent apps" className="flex w-12 justify-center">
        <span className="h-8 w-8 rounded-xs bg-current" />
      </button>
      <button aria-label="Home">
        <svg className="h-[50px] w-[50px]" viewBox="0 0 50 50" fill="currentColor">
          <circle cx="25" cy="25" r="23" fill="none" stroke="currentColor" strokeWidth="3" />
          <circle cx="25" cy="25" r="17" />
        </svg>
      </button>
      <button aria-label="System back" className="flex w-12 justify-center">
        <svg className="h-[38px] w-8" viewBox="0 0 32 38" fill="currentColor" stroke="currentColor" strokeWidth="2">
          <path d="M31 2V36L1 19Z" strokeLinejoin="round" />
        </svg>
      </button>
    </footer>
  );
}

export default function App() {
  return (
    <div className="flex min-h-screen w-full flex-col bg-white font-[Inter,sans-serif]">
      <StatusBar />
      <main className="flex flex-1 flex-col">
        <MapView />
        <section className="relative -mt-10 rounded-t-[36px] bg-white shadow-[0_-5px_0_rgba(0,0,0,0.16)]">
          <ContactRow />
          <OrderInfo />
          <Figures />
          <SlideToConfirm />
        </section>
      </main>
      <ActionBar />
      <SystemKeys />
    </div>
  );
}
